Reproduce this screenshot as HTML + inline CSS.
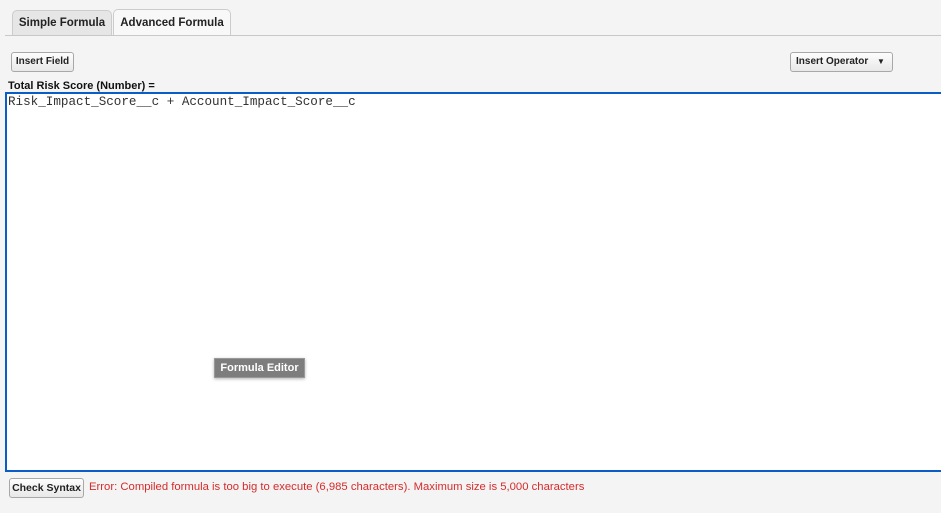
<!DOCTYPE html>
<html><head><style>
body{margin:0;width:941px;height:513px;background:#f4f4f4;font-family:"Liberation Sans",Arial,sans-serif;position:relative;overflow:hidden}
.tab{position:absolute;font-size:11.5px;font-weight:bold;color:#222;border:1px solid #ccc;border-bottom:none;border-radius:5px 5px 0 0;box-sizing:border-box;text-align:center}
.btn{position:absolute;font-size:10px;font-weight:bold;color:#222;background:linear-gradient(#fdfdfd,#e8e8e8);border:1px solid #a8a8a8;border-radius:3px;box-sizing:border-box;text-align:center}
</style></head><body>
<div class="tab" style="left:12px;top:10px;width:100px;height:26px;background:#e6e6e6;line-height:24px">Simple Formula</div>
<div class="tab" style="left:113px;top:9px;width:118px;height:27px;background:#f8f8f8;line-height:26px">Advanced Formula</div>
<div style="position:absolute;left:5px;top:35px;width:936px;height:1px;background:#c8c8c8"></div>
<div class="btn" style="left:11px;top:52px;width:63px;height:20px;line-height:18px">Insert Field</div>
<div class="btn" style="left:790px;top:52px;width:103px;height:20px;line-height:18px;text-align:left;padding-left:5px">Insert Operator <span style="font-size:8px;margin-left:6px">▼</span></div>
<div style="position:absolute;left:8px;top:80px;font-size:11px;font-weight:bold;color:#111">Total Risk Score (Number) =</div>
<div style="position:absolute;left:5px;top:92px;width:940px;height:380px;border:2px solid #0b5cc6;box-sizing:border-box;background:#fff;font-family:'Liberation Mono',monospace;font-size:12.6px;color:#333;padding:1px 1px">Risk_Impact_Score__c + Account_Impact_Score__c</div>
<div style="position:absolute;left:214px;top:358px;width:91px;height:20px;background:#7d7d7d;border:1px solid #999;box-sizing:border-box;color:#fff;font-size:11px;font-weight:bold;text-align:center;line-height:18px;box-shadow:0 1px 3px rgba(0,0,0,.3)">Formula Editor</div>
<div class="btn" style="left:9px;top:478px;width:75px;height:20px;line-height:18px;font-size:10.5px">Check Syntax</div>
<div style="position:absolute;left:89px;top:481px;font-size:11.3px;color:#d62b2b">Error: Compiled formula is too big to execute (6,985 characters). Maximum size is 5,000 characters</div>
</body></html>
